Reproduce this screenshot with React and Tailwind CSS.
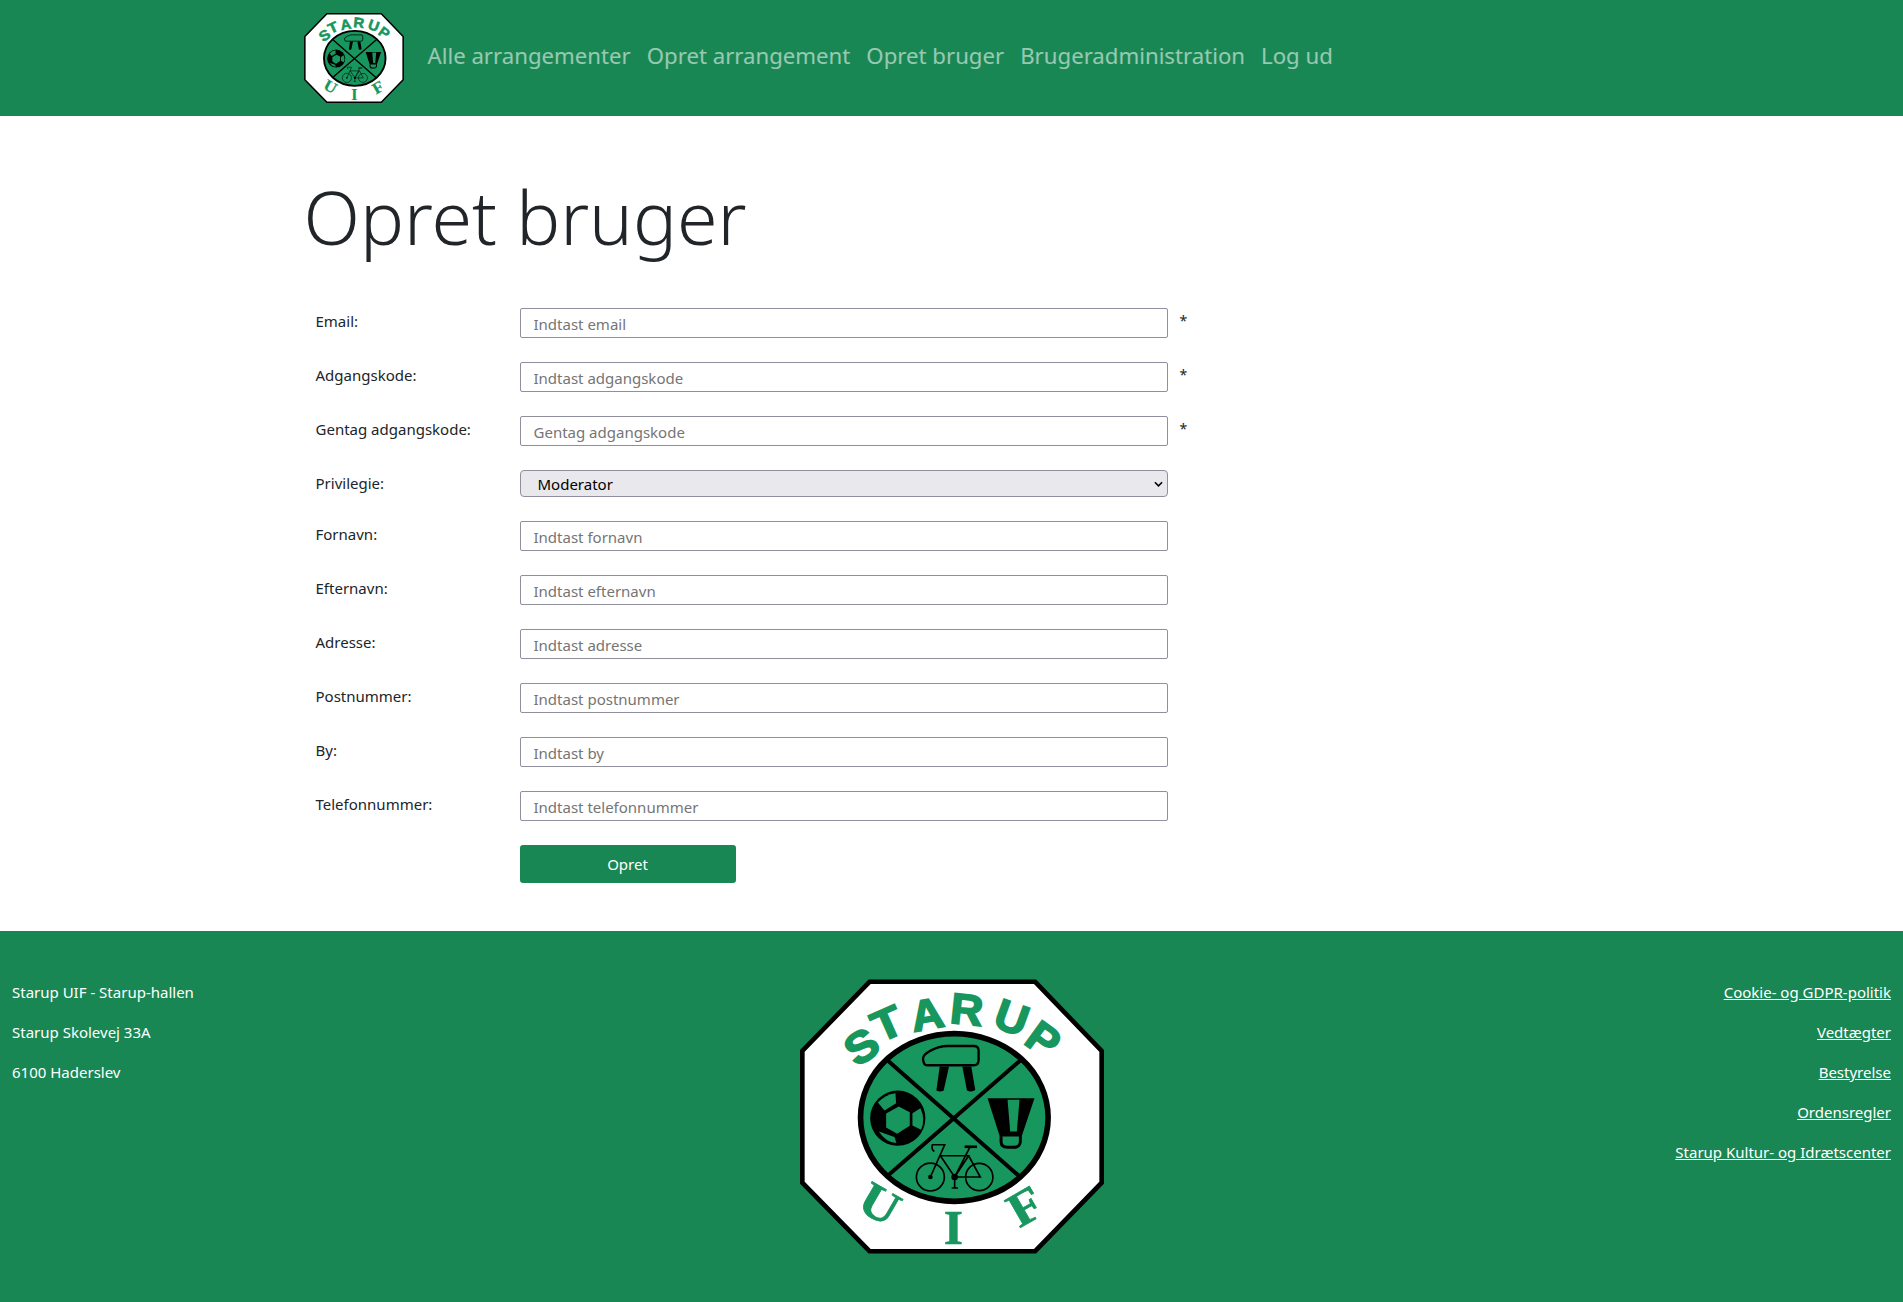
import React from "react";

const font = "font-['Noto_Sans','Open_Sans',sans-serif]";

const navLinks = ["Alle arrangementer", "Opret arrangement", "Opret bruger", "Brugeradministration", "Log ud"];

const fields = [
  { label: "Email:", placeholder: "Indtast email", required: true },
  { label: "Adgangskode:", placeholder: "Indtast adgangskode", required: true },
  { label: "Gentag adgangskode:", placeholder: "Gentag adgangskode", required: true },
  { label: "Privilegie:", select: true },
  { label: "Fornavn:", placeholder: "Indtast fornavn" },
  { label: "Efternavn:", placeholder: "Indtast efternavn" },
  { label: "Adresse:", placeholder: "Indtast adresse" },
  { label: "Postnummer:", placeholder: "Indtast postnummer" },
  { label: "By:", placeholder: "Indtast by" },
  { label: "Telefonnummer:", placeholder: "Indtast telefonnummer" },
];

const footerLinks = ["Cookie- og GDPR-politik", "Vedtægter", "Bestyrelse", "Ordensregler", "Starup Kultur- og Idrætscenter"];

const LOGO_GREEN = "#17965e";

// coordinates follow the logo at 3x, the viewBox crops to its octagon
const Logo = ({ className }) => (
  <svg viewBox="58 58 914 824" className={className} role="img" aria-label="Starup UIF">
    <polygon points="267,65 765,65 965,273 965,669 765,875 267,875 65,669 65,273" fill="#fff" stroke="#000" strokeWidth="14" />
    <g fill={LOGO_GREEN} fontFamily="'Liberation Sans', sans-serif" fontWeight="700" fontSize="130" textAnchor="middle" stroke={LOGO_GREEN} strokeWidth="5">
      <text transform="translate(243,260) rotate(-34) scale(1.1,1)" dominantBaseline="central">S</text>
      <text transform="translate(320,190) rotate(-24) scale(1.12,1)" dominantBaseline="central">T</text>
      <text transform="translate(440,163) rotate(-10) scale(1.05,1)" dominantBaseline="central">A</text>
      <text transform="translate(560,148) rotate(6) scale(1.05,1)" dominantBaseline="central">R</text>
      <text transform="translate(695,172) rotate(20) scale(1.05,1)" dominantBaseline="central">U</text>
      <text transform="translate(790,238) rotate(36) scale(1.05,1)" dominantBaseline="central">P</text>
    </g>
    <g fill={LOGO_GREEN} fontFamily="'Liberation Serif', serif" fontWeight="700" fontSize="146" textAnchor="middle" stroke={LOGO_GREEN} strokeWidth="2">
      <text transform="translate(298,733) rotate(30) scale(1.1,1)" dominantBaseline="central">U</text>
      <text transform="translate(519,805)" dominantBaseline="central">I</text>
      <text transform="translate(735,740) rotate(-30) scale(1.1,1)" dominantBaseline="central">F</text>
    </g>
    <ellipse cx="522" cy="473" rx="282" ry="252" fill={LOGO_GREEN} stroke="#000" strokeWidth="17" />
    <path d="M320 300L718 650M722 300L325 645" stroke="#000" strokeWidth="12" fill="none" />
    {/* vault */}
    <path d="M428 298C426 284 446 272 474 262Q488 258 504 258H580Q595 258 595 272V300Q595 316 580 316H440Q430 316 428 298Z" fill="none" stroke="#000" strokeWidth="7" />
    <path d="M478 320H506L490 392Q480 398 468 392ZM546 320H573L585 390Q572 398 560 392Z" fill="#000" />
    {/* ball: black disc with the green panels on top */}
    <circle cx="352" cy="475" r="83" fill="#000" />
    <g fill={LOGO_GREEN}>
      <polygon points="355,440 388,457 388,498 350,522 317,503 317,461" />
      <path d="M292 428Q315 404 345 400L347 430L312 452Z" />
      <path d="M396 460L420 445Q436 478 422 510L396 497Z" />
      <path d="M295 515L342 532L348 550Q316 548 295 515Z" />
    </g>
    {/* shuttlecock */}
    <path d="M622 415H763L725 528V545Q723 567 700 567H682Q658 567 658 545V528Z" fill="#000" />
    <path d="M682 420H718L710 515H690ZM667 530H716V545Q716 558 700 558H682Q667 558 667 545Z" fill={LOGO_GREEN} />
    {/* bicycle */}
    <g fill="none" stroke="#000" strokeWidth="5">
      <circle cx="450" cy="652" r="42" />
      <circle cx="597" cy="652" r="41" />
      <path d="M450 652L493 555H456Q452 570 462 575M480 588H565L523 652L480 588M570 560L523 652H600L565 588M523 652V685M514 685H533" />
      <path d="M553 561H590" strokeWidth="8" />
    </g>
    <circle cx="523" cy="652" r="10" fill="#000" />
    <circle cx="450" cy="652" r="7" fill="#000" />
  </svg>
);

const Field = ({ label, placeholder, select, required }) => (
  <div className="flex items-start mb-6">
    <label className="w-[216px] pl-3 pt-[2px] text-[15px] leading-[22px] text-[#212529]">{label}</label>
    {select ? (
      <div className="relative w-[648px] h-[27px]">
        <select defaultValue="Moderator" className="appearance-none w-full h-full pl-[17px] pt-[1px] text-[15px] text-black bg-[#e9e9ed] border border-[#8f8f9d] rounded-[4px]">
          <option>Moderator</option>
        </select>
        <svg viewBox="0 0 10 6" className="absolute right-[5px] top-[11px] w-[9px] h-[6px]" fill="none" stroke="#000" strokeWidth="1.7">
          <path d="M1 1l4 4 4-4" />
        </svg>
      </div>
    ) : (
      <input
        placeholder={placeholder}
        className="w-[648px] h-[30px] pl-[13px] pr-3 pt-[1px] text-[15px] bg-white border border-[#8f8f9d] rounded-[2px] placeholder:text-[#757575] outline-none"
      />
    )}
    {required && <span className="ml-3 pt-[2px] text-[14px] leading-[22px] text-[#212529]">*</span>}
  </div>
);

export default function App() {
  return (
    <div className={`${font} min-h-[1302px] bg-white text-[#212529]`}>
      <nav className="h-[116px] bg-[#198754]">
        <div className="w-[1320px] mx-auto px-3 h-full flex items-center">
          <Logo className="w-[100px] h-[90px] mr-6" />
          {navLinks.map((link) => (
            <a key={link} href="#" className="mr-4 mb-[4px] text-[22.2px] text-white/55">{link}</a>
          ))}
        </div>
      </nav>

      <main className="w-[1320px] mx-auto px-3 pt-[57px] pb-[48px]">
        <h1 className="text-[73.5px] leading-[88px] font-light mb-[47px]">Opret bruger</h1>
        <form>
          {fields.map((f) => <Field key={f.label} {...f} />)}
          <div className="pl-[216px]">
            <button type="button" className="w-[216px] h-[38px] pt-[1px] bg-[#198754] text-white text-[15px] rounded-[3px]">Opret</button>
          </div>
        </form>
      </main>

      <footer className="h-[371px] bg-[#198754] px-3 pt-12 flex justify-between text-white text-[15px]">
        <div className="flex-1 flex flex-col gap-[18px] pt-[2px] leading-[22px]">
          <p>Starup UIF - Starup-hallen</p>
          <p>Starup Skolevej 33A</p>
          <p>6100 Haderslev</p>
        </div>
        <Logo className="w-[304px] h-[275px]" />
        <div className="flex-1 flex flex-col items-end gap-[18px] pt-[2px] leading-[22px]">
          {footerLinks.map((link) => (
            <a key={link} href="#" className="underline">{link}</a>
          ))}
        </div>
      </footer>
    </div>
  );
}
